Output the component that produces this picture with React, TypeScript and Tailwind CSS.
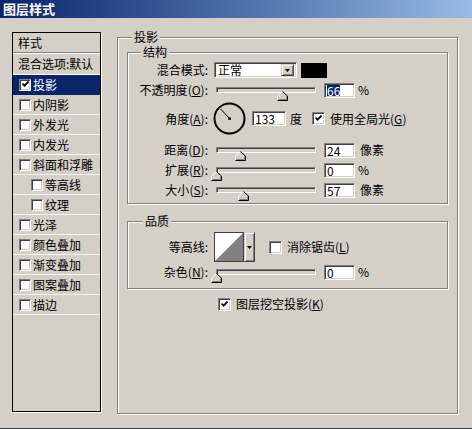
import React from "react";

const SUNKEN =
  "border border-t-[#808080] border-l-[#808080] border-r-white border-b-white shadow-[inset_1px_1px_0_#404040,inset_-1px_-1px_0_#d4d0c8]";
const RAISED =
  "border border-t-[#d4d0c8] border-l-[#d4d0c8] border-r-[#404040] border-b-[#404040] shadow-[inset_1px_1px_0_#fff,inset_-1px_-1px_0_#808080]";
const ETCHED = "border border-[#808080] shadow-[inset_1px_1px_0_#fff,1px_1px_0_#fff]";

const styles = [
  { label: "投影", checked: true, selected: true },
  { label: "内阴影" },
  { label: "外发光" },
  { label: "内发光" },
  { label: "斜面和浮雕" },
  { label: "等高线", indent: true },
  { label: "纹理", indent: true },
  { label: "光泽" },
  { label: "颜色叠加" },
  { label: "渐变叠加" },
  { label: "图案叠加" },
  { label: "描边" },
];

export default function App() {
  return (
    <div className="w-[472px] h-[429px] overflow-hidden bg-[#d4d0c8] text-black text-[12px] leading-[14px] font-['Noto_Sans_CJK_SC','Noto_Sans',sans-serif] flex flex-col">
      <div className="h-[18px] shrink-0 bg-gradient-to-r from-[#0a246a] to-[#98bce6] flex items-center pl-[3px] text-white font-bold text-[13px]">
        图层样式
      </div>
      <div className="h-[410px] flex items-start">
        <StyleList />
        <ShadowPanel />
      </div>
      <div className="h-[1px] bg-[#404040]" />
    </div>
  );
}

function Check({ checked = false, small = false }: { checked?: boolean; small?: boolean }) {
  return (
    <span
      className={`${small ? "w-[12px] h-[12px]" : "w-[13px] h-[13px]"} shrink-0 bg-white ${SUNKEN} flex items-center justify-center`}
    >
      {checked && (
        <svg width="7" height="7" viewBox="0 0 7 7">
          <path d="M0.5 2.5 L2.5 4.7 L6.5 0.6" stroke="#000" strokeWidth="1.8" fill="none" />
        </svg>
      )}
    </span>
  );
}

function StyleList() {
  return (
    <div className="ml-[12px] mt-[14px] w-[89px] h-[380px] border border-black flex flex-col shadow-[1px_1px_0_#fff]">
      <div className="h-[20px] flex items-center pl-[5px] border-b border-[#808080]">样式</div>
      <div className="h-[1px] bg-white" />
      <div className="h-[21px] flex items-center pl-[5px] border-b border-white whitespace-nowrap">混合选项:默认</div>
      {styles.map((s) => (
        <div
          key={s.label}
          className={`h-[20px] flex items-center gap-[2px] border-b ${
            s.selected ? "bg-[#0a246a] text-white border-[#0a246a]" : "border-[#f4f4f0]"
          } ${s.indent ? "pl-[18px]" : "pl-[6px]"}`}
        >
          <Check checked={s.checked} small />
          <span>{s.label}</span>
        </div>
      ))}
    </div>
  );
}

function Legend({ children, className }: { children: React.ReactNode; className: string }) {
  return <span className={`absolute top-[-8px] px-[2px] bg-[#d4d0c8] ${className}`}>{children}</span>;
}

function Label({ children }: { children: React.ReactNode }) {
  return <div className="w-[80px] shrink-0 text-right whitespace-nowrap">{children}</div>;
}

function Key({ k }: { k: string }) {
  return (
    <>
      (<span className="underline">{k}</span>)
    </>
  );
}

function Field({ children, wide = false }: { children: React.ReactNode; wide?: boolean }) {
  return (
    <div className={`${wide ? "w-[34px]" : "w-[31px]"} h-[15px] shrink-0 bg-white ${SUNKEN} flex items-center pl-[2px] leading-[11px]`}>
      {children}
    </div>
  );
}

function Thumb() {
  return (
    <svg width="11" height="10" viewBox="0 0 11 10">
      <polygon points="5.5,0.5 10.5,5 10.5,9.5 0.5,9.5 0.5,5" fill="#d4d0c8" />
      <polyline points="0.5,9 0.5,5 5.5,0.5" stroke="#fff" fill="none" />
      <polyline points="5.5,0.5 10.5,5 10.5,9.5 0.5,9.5" stroke="#000" fill="none" />
      <polyline points="1.5,8.5 9.5,8.5 9.5,5.5" stroke="#808080" fill="none" />
    </svg>
  );
}

function Slider({ pos }: { pos: number }) {
  return (
    <div className="relative ml-[2px] w-[100px] h-[6px] shrink-0 bg-[#d4d0c8] border border-t-[#808080] border-l-[#808080] border-r-white border-b-white shadow-[inset_1px_1px_0_#404040]">
      <div className="absolute top-[3px] flex" style={{ left: pos - 6.5 }}>
        <Thumb />
      </div>
    </div>
  );
}

function SliderRow({
  label,
  pos,
  value,
  unit,
  selected = false,
  h = "h-[20px]",
}: {
  label: React.ReactNode;
  pos: number;
  value: string;
  unit: string;
  selected?: boolean;
  h?: string;
}) {
  return (
    <div className={`flex items-center ${h}`}>
      <Label>{label}</Label>
      <div className="ml-[6px] flex items-center">
        <Slider pos={pos} />
        <div className="ml-[8px]">
          <Field>{selected ? <span className="bg-[#0a246a] text-white">{value}</span> : value}</Field>
        </div>
        <span className={unit === "%" ? "ml-[3px]" : "ml-[5px]"}>{unit}</span>
      </div>
    </div>
  );
}

function DropArrow() {
  return (
    <svg width="5" height="3" viewBox="0 0 5 3">
      <polygon points="0,0 5,0 2.5,3" fill="#000" />
    </svg>
  );
}

function ShadowPanel() {
  return (
    <div className={`relative ml-[16px] mt-[19px] w-[341px] h-[377px] ${ETCHED} pt-[14px] pl-[9px]`}>
      <Legend className="left-[14px]">投影</Legend>

      <div className={`relative w-[321px] h-[152px] ${ETCHED} pt-[9px]`}>
        <Legend className="left-[13px]">结构</Legend>

        <div className="flex items-center h-[16px]">
          <Label>混合模式:</Label>
          <div className="ml-[6px] flex items-center">
            <div className={`w-[83px] h-[16px] bg-white ${SUNKEN} flex items-center justify-between pl-[3px] pr-[2px]`}>
              <span>正常</span>
              <div className={`w-[13px] h-[12px] bg-[#d4d0c8] ${RAISED} flex items-center justify-center`}>
                <DropArrow />
              </div>
            </div>
            <div className="ml-[4px] w-[26px] h-[15px] bg-black" />
          </div>
        </div>

        <div className="mt-[2px]">
          <SliderRow label={<>不透明度<Key k="O" />:</>} pos={66} value="66" unit="%" selected />
        </div>

        <div className="mt-[2px] flex items-center h-[33px]">
          <Label>
            角度<Key k="A" />:
          </Label>
          <div className="ml-[5px] flex items-center">
            <svg width="33" height="33" viewBox="0 0 33 33">
              <circle cx="16.5" cy="16.5" r="15" fill="none" stroke="#000" strokeWidth="2" />
              <line x1="16.5" y1="16.5" x2="7.6" y2="7" stroke="#000" strokeWidth="1" />
              <rect x="15.3" y="15.3" width="2.6" height="2.6" fill="#000" />
            </svg>
            <div className="ml-[6px]">
              <Field wide>133</Field>
            </div>
            <span className="ml-[4px]">度</span>
            <div className="ml-[10px] flex items-center gap-[5px]">
              <Check checked />
              <span>
                使用全局光<Key k="G" />
              </span>
            </div>
          </div>
        </div>

        <div className="mt-[5px]">
          <SliderRow label={<>距离<Key k="D" />:</>} pos={24} value="24" unit="像素" />
        </div>
        <SliderRow label={<>扩展<Key k="R" />:</>} pos={0} value="0" unit="%" />
        <SliderRow label={<>大小<Key k="S" />:</>} pos={27} value="57" unit="像素" />
      </div>

      <div className={`relative mt-[17px] w-[321px] h-[68px] ${ETCHED} pt-[10px]`}>
        <Legend className="left-[15px]">品质</Legend>

        <div className="flex items-center h-[30px]">
          <Label>等高线:</Label>
          <div className="ml-[6px] flex items-center">
            <div className="w-[30px] h-[30px] border border-[#404040] bg-white flex">
              <svg width="28" height="28" viewBox="0 0 28 28">
                <polygon points="0,28 28,0 28,28" fill="#808080" />
              </svg>
            </div>
            <div className={`w-[11px] h-[30px] bg-[#d4d0c8] ${RAISED} flex items-center justify-center`}>
              <DropArrow />
            </div>
            <div className="ml-[14px] flex items-center gap-[5px]">
              <Check />
              <span>
                消除锯齿<Key k="L" />
              </span>
            </div>
          </div>
        </div>

        <SliderRow label={<>杂色<Key k="N" />:</>} pos={0} value="0" unit="%" />
      </div>

      <div className="mt-[8px] ml-[91px] h-[14px] flex items-center gap-[5px]">
        <Check checked />
        <span>
          图层挖空投影<Key k="K" />
        </span>
      </div>
    </div>
  );
}
